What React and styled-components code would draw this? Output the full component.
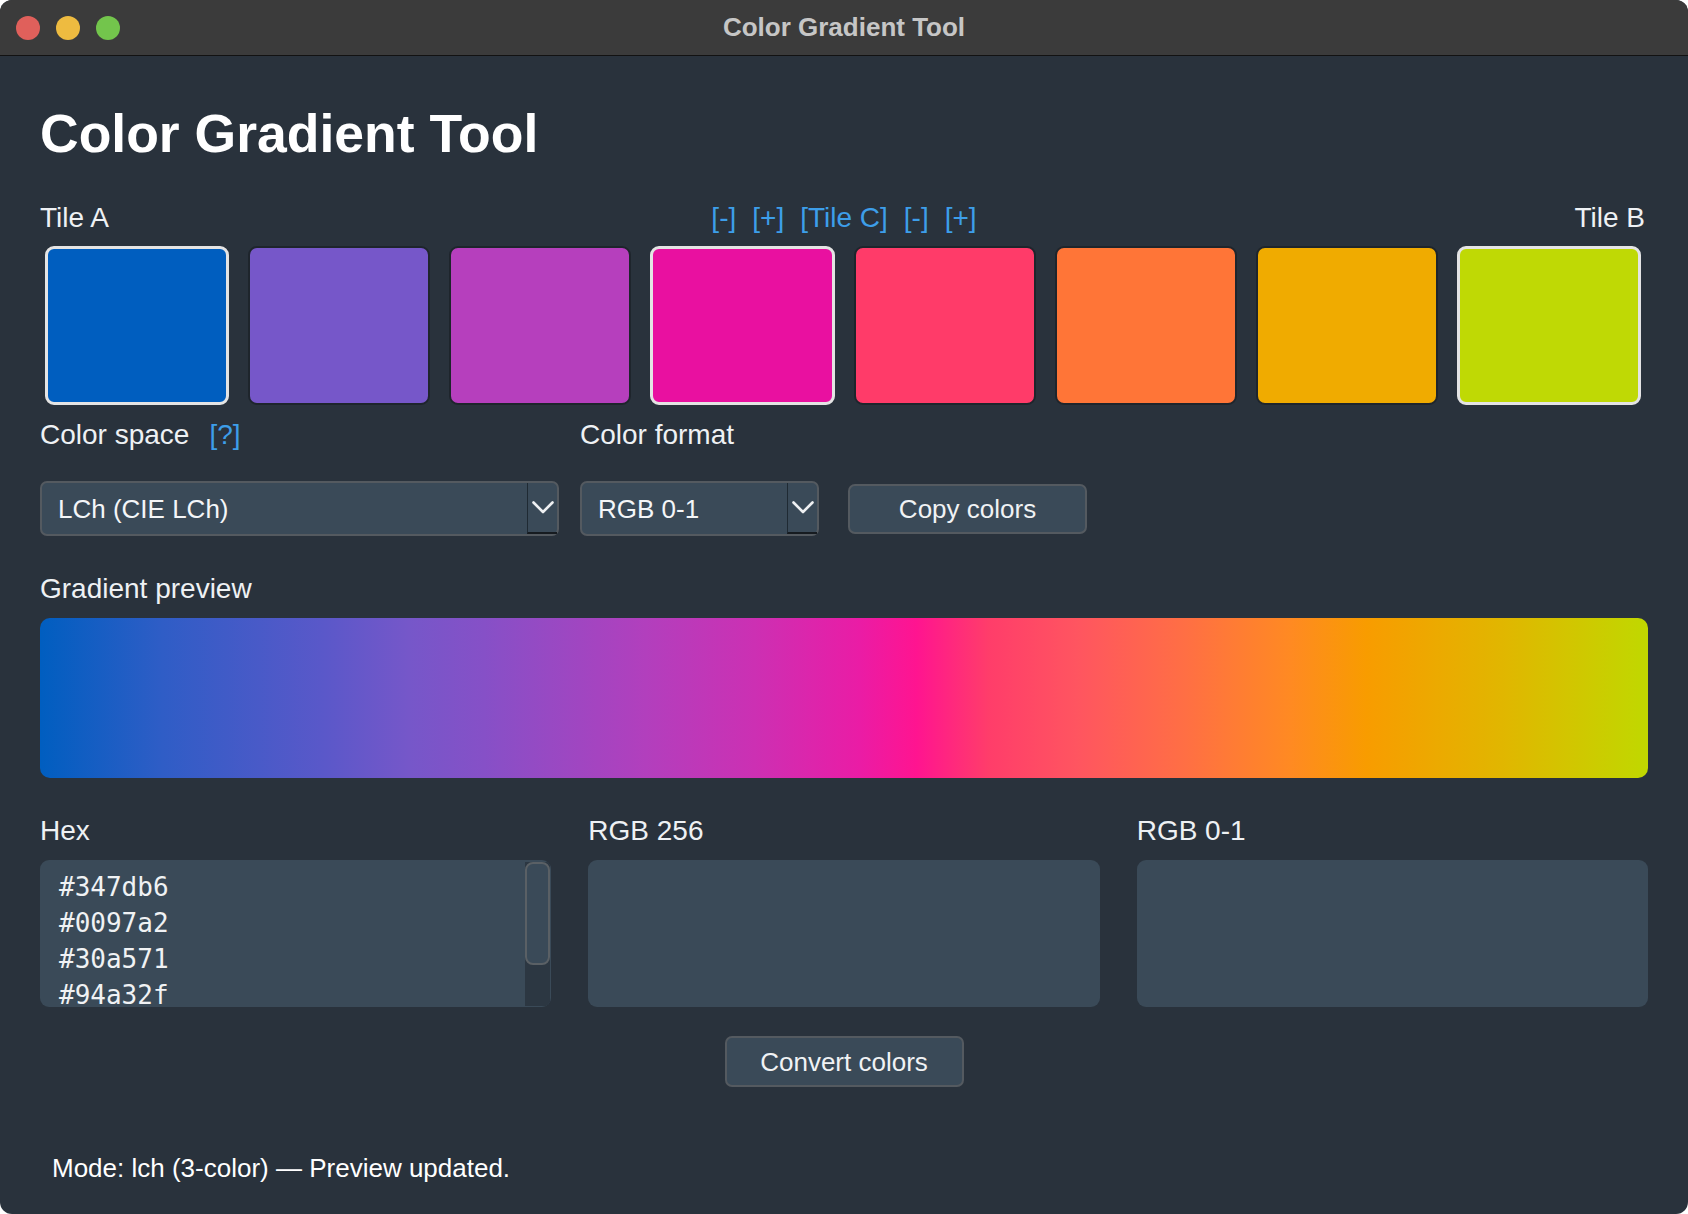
import React from 'react';
import styled, { createGlobalStyle } from 'styled-components';

const GlobalStyle = createGlobalStyle`
  html, body { margin: 0; padding: 0; background: #ffffff; }
  body { font-family: "Liberation Sans", Arial, Helvetica, sans-serif; }
  * { box-sizing: border-box; }
`;

const Window = styled.div`
  width: 1688px;
  height: 1214px;
  border-radius: 12px;
  overflow: hidden;
  background: #29323c;
  display: flex;
  flex-direction: column;
`;

const TitleBar = styled.div`
  height: 56px;
  flex: none;
  background: #3b3b3b;
  border-bottom: 1px solid #121212;
  display: grid;
  grid-template-columns: 1fr auto 1fr;
  align-items: center;
`;

const Lights = styled.div`
  display: flex;
  gap: 16px;
  padding-left: 16px;
`;

const Light = styled.span`
  width: 24px;
  height: 24px;
  border-radius: 50%;
  background: ${(p) => p.$color};
`;

const WindowTitle = styled.div`
  font: 700 26px/30px "Liberation Sans", Arial, sans-serif;
  color: #c6c6c6;
  padding-bottom: 2px;
`;

const Content = styled.div`
  flex: 1;
  display: flex;
  flex-direction: column;
  padding: 46px 40px 0;
`;

const Heading = styled.h1`
  margin: 0;
  font: 700 53.5px/64px "Liberation Sans", Arial, sans-serif;
  color: #ffffff;
`;

const LabelText = styled.div`
  font: 400 28px/32px "Liberation Sans", Arial, sans-serif;
  color: #eef1f4;
  white-space: nowrap;
`;

const TileLabelRow = styled(LabelText)`
  margin-top: 36px;
  display: grid;
  grid-template-columns: 1fr auto 1fr;
`;

const TileEnd = styled.span`
  justify-self: ${(p) => (p.$end ? 'end' : 'start')};
  padding-right: ${(p) => (p.$end ? '3px' : '0')};
`;

const LinkGroup = styled.div`
  display: flex;
  gap: 16px;
`;

const Link = styled.span`
  color: #3d9ee9;
  margin-left: ${(p) => p.$offset || 0}px;
`;

const TilesRow = styled.div`
  margin-top: 12px;
  display: flex;
  gap: 19px;
  padding: 0 7px 0 5px;
`;

const Tile = styled.div`
  flex: 1;
  height: 159px;
  border-radius: 9px;
  background: ${(p) => p.$color};
  border: ${(p) => (p.$selected ? '3px solid #e4e4e4' : '2px solid #1e252c')};
`;

const ControlsGrid = styled.div`
  margin-top: 14px;
  display: grid;
  grid-template-columns: 519px 239px 239px;
  column-gap: 21px;
  row-gap: 30px;
  align-items: center;
`;

const Select = styled.div`
  height: 55px;
  border: 2px solid #545a60;
  border-radius: 7px;
  background: #3a4a58;
  display: flex;
  align-items: center;
  padding-left: 16px;
  font: 400 26px/32px "Liberation Sans", Arial, sans-serif;
  color: #f4f6f8;
`;

const SelectValue = styled.span`
  flex: 1;
`;

const ArrowBox = styled.div`
  align-self: stretch;
  width: 30px;
  border-left: 1px solid #1f2a33;
  border-bottom: 2px solid #161b20;
  display: flex;
  align-items: center;
  justify-content: center;
`;

const Button = styled.div`
  height: ${(p) => p.$h || 50}px;
  width: 239px;
  border: 2px solid #545a60;
  border-radius: 7px;
  background: #3a4a58;
  display: flex;
  align-items: center;
  justify-content: center;
  font: 400 26px/32px "Liberation Sans", Arial, sans-serif;
  color: #f0f2f4;
`;

const CopyButton = styled(Button)`
  margin-left: 8px;
`;

const ConvertButton = styled(Button)`
  margin: 29px auto 0;
`;

const SectionLabel = styled(LabelText)`
  margin-top: 37px;
`;

const GradientBar = styled.div`
  margin-top: 13px;
  height: 160px;
  border-radius: 10px;
  background: linear-gradient(
    to right,
    #005ec0 0%,
    #2f5dc6 7.6%,
    #5a58c9 17.6%,
    #7657c9 23%,
    #8650c7 27.6%,
    #b23fbd 37.7%,
    #cc30b3 44.4%,
    #ea1ca5 51%,
    #ff1490 54.5%,
    #ff3d6a 59%,
    #ff5560 64.5%,
    #ff6e45 71%,
    #ff8a22 77.8%,
    #f89c00 82.5%,
    #e0b700 91.2%,
    #c0d800 100%
  );
`;

const OutputGrid = styled.div`
  margin-top: 37px;
  display: grid;
  grid-template-columns: repeat(3, 1fr);
  column-gap: 37px;
  row-gap: 13px;
`;

const TextBox = styled.div`
  height: 147px;
  border-radius: 9px;
  background: #3a4a58;
  overflow: hidden;
  display: flex;
`;

const TextLines = styled.div`
  flex: 1;
  padding: 9px 0 0 19px;
  font: 400 26px/36px "DejaVu Sans Mono", "Liberation Mono", monospace;
  color: #f0f2f4;
  white-space: pre;
`;

const ScrollTrack = styled.div`
  width: 25px;
  margin: 2px 1px 1px 0;
  background: #2c3742;
  display: flex;
  flex-direction: column;
`;

const ScrollThumb = styled.div`
  height: 103px;
  border: 2px solid #5a6065;
  border-radius: 8px;
  background: #3a4a58;
`;

const Status = styled.div`
  margin-top: 65px;
  padding-left: 12px;
  font: 400 26px/32px "Liberation Sans", Arial, sans-serif;
  color: #ffffff;
`;

const Chevron = () => (
  <svg width="22" height="13" viewBox="0 0 22 13" fill="none">
    <polyline points="1.5,1.5 11,11 20.5,1.5" stroke="#eef0f2" strokeWidth="2.6" strokeLinecap="round" strokeLinejoin="round" />
  </svg>
);

const tiles = [
  { color: '#005ebf', selected: true },
  { color: '#7657c9' },
  { color: '#b63fbd' },
  { color: '#e910a0', selected: true },
  { color: '#ff3b69' },
  { color: '#ff7537' },
  { color: '#f0ab00' },
  { color: '#bfd905', selected: true },
];

const hexValues = ['#347db6', '#0097a2', '#30a571', '#94a32f', '#d1893a', '#c8506b', '#7c5fb0'];

export default function App() {
  return (
    <>
      <GlobalStyle />
      <Window>
        <TitleBar>
          <Lights>
            <Light $color="#e0605b" />
            <Light $color="#eebb40" />
            <Light $color="#73c54c" />
          </Lights>
          <WindowTitle>Color Gradient Tool</WindowTitle>
          <span />
        </TitleBar>
        <Content>
          <Heading>Color Gradient Tool</Heading>

          <TileLabelRow>
            <TileEnd>Tile A</TileEnd>
            <LinkGroup>
              <Link>[-]</Link>
              <Link>[+]</Link>
              <Link>[Tile C]</Link>
              <Link>[-]</Link>
              <Link>[+]</Link>
            </LinkGroup>
            <TileEnd $end>Tile B</TileEnd>
          </TileLabelRow>

          <TilesRow>
            {tiles.map((t, i) => (
              <Tile key={i} $color={t.color} $selected={t.selected} />
            ))}
          </TilesRow>

          <ControlsGrid>
            <LabelText>
              Color space<Link $offset={20}>[?]</Link>
            </LabelText>
            <LabelText>Color format</LabelText>
            <span />
            <Select>
              <SelectValue>LCh (CIE LCh)</SelectValue>
              <ArrowBox>
                <Chevron />
              </ArrowBox>
            </Select>
            <Select>
              <SelectValue>RGB 0-1</SelectValue>
              <ArrowBox>
                <Chevron />
              </ArrowBox>
            </Select>
            <CopyButton>Copy colors</CopyButton>
          </ControlsGrid>

          <SectionLabel>Gradient preview</SectionLabel>
          <GradientBar />

          <OutputGrid>
            <LabelText>Hex</LabelText>
            <LabelText>RGB 256</LabelText>
            <LabelText>RGB 0-1</LabelText>
            <TextBox>
              <TextLines>{hexValues.join('\n')}</TextLines>
              <ScrollTrack>
                <ScrollThumb />
              </ScrollTrack>
            </TextBox>
            <TextBox />
            <TextBox />
          </OutputGrid>

          <ConvertButton $h={51}>Convert colors</ConvertButton>

          <Status>Mode: lch (3-color) — Preview updated.</Status>
        </Content>
      </Window>
    </>
  );
}
